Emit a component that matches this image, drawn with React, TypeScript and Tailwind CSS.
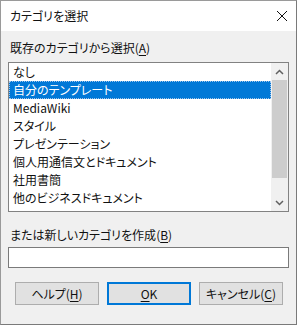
import { useState } from 'react'

const FONT = { fontFamily: '"Noto Sans CJK JP", "Noto Sans", sans-serif' }

const ITEMS = [
  'なし',
  '自分のテンプレート',
  'MediaWiki',
  'スタイル',
  'プレゼンテーション',
  '個人用通信文とドキュメント',
  '社用書簡',
  '他のビジネスドキュメント',
]

function Accel({ text, k }: { text: string; k: string }) {
  return (
    <span>
      {text}(<span className="underline underline-offset-2">{k}</span>)
    </span>
  )
}

function ScrollBar() {
  return (
    <div className="w-[17px] flex flex-col bg-[#f0f0f0]">
      <div className="h-[17px] flex items-center justify-center">
        <svg width="9" height="6" viewBox="0 0 9 6">
          <path d="M1 5 L4.5 1.5 L8 5" fill="none" stroke="#606060" strokeWidth="1.5" />
        </svg>
      </div>
      <div className="h-[98px] mx-[1px] bg-[#cdcdcd]" />
      <div className="flex-1" />
      <div className="h-[17px] flex items-center justify-center">
        <svg width="9" height="6" viewBox="0 0 9 6">
          <path d="M1 1 L4.5 4.5 L8 1" fill="none" stroke="#606060" strokeWidth="1.5" />
        </svg>
      </div>
    </div>
  )
}

export default function App() {
  const [selected, setSelected] = useState(1)
  const [name, setName] = useState('')

  return (
    <div className="w-[298px] h-[326px] bg-white [font-feature-settings:'palt']" style={FONT}>
      <div className="w-[297px] h-[325px] flex flex-col border border-[#9a9a9a] border-r-[#7a7a7a] border-b-[#7a7a7a] bg-[#f0f0f0] text-[12px] text-[#111]">
        <div className="h-[30px] bg-white flex items-center justify-between pl-[9px] pr-[8px]">
          <span>カテゴリを選択</span>
          <svg width="12" height="12" viewBox="0 0 12 12">
            <path d="M1 1 L11 11 M11 1 L1 11" stroke="#111" strokeWidth="1" />
          </svg>
        </div>

        <div className="flex flex-col px-[7px] flex-1">
          <div className="mt-[9px] h-[16px] leading-[16px] pl-[2px]">
            <Accel text="既存のカテゴリから選択" k="A" />
          </div>
          <div className="mt-[6px] h-[150px] border border-[#828282] bg-white flex">
            <div className="flex-1 flex flex-col">
              {ITEMS.map((item, i) => (
                <div
                  key={item}
                  onClick={() => setSelected(i)}
                  className={
                    i === selected
                      ? 'h-[18px] leading-[16px] pl-[3px] bg-[#0078d7] text-white border border-dotted border-[#9fc4ea]'
                      : 'h-[18px] leading-[18px] pl-[4px]'
                  }
                >
                  {item}
                </div>
              ))}
            </div>
            <ScrollBar />
          </div>

          <div className="mt-[15px] h-[16px] leading-[16px] pl-[2px]">
            <Accel text="または新しいカテゴリを作成" k="B" />
          </div>
          <input
            value={name}
            onChange={(e) => setName(e.target.value)}
            className="mt-[4px] h-[21px] border border-[#7a7a7a] bg-white outline-none px-1 text-[12px]"
          />

          <div className="mt-[14px] flex gap-[8px] pl-[7px]">
            <button className="w-[84px] h-[23px] bg-[#e1e1e1] border border-[#adadad]">
              <Accel text="ヘルプ" k="H" />
            </button>
            <button className="w-[84px] h-[23px] bg-[#e1e1e1] border-2 border-[#0078d7]">
              <span className="underline underline-offset-2">O</span>K
            </button>
            <button className="w-[84px] h-[23px] bg-[#e1e1e1] border border-[#adadad]">
              <Accel text="キャンセル" k="C" />
            </button>
          </div>
        </div>
      </div>
    </div>
  )
}
